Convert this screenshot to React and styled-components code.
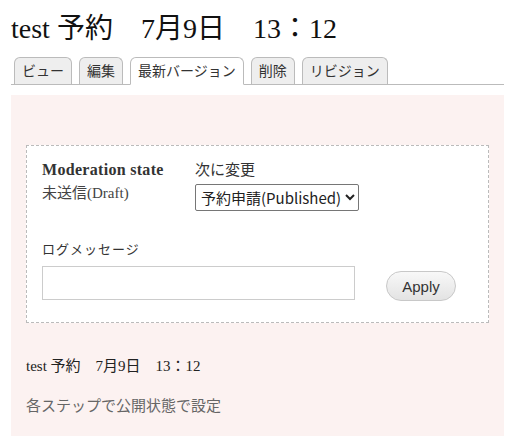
import styled, { createGlobalStyle } from 'styled-components';

const GlobalStyle = createGlobalStyle`
  body {
    margin: 0;
    background: #fff;
    font-family: "Liberation Serif", "Noto Sans CJK JP", serif;
    color: #222;
  }
`;

const Page = styled.div`
  padding: 0 7px 0 11px;
`;

const Title = styled.h1`
  margin: 12px 0 11px;
  font-size: 28px;
  line-height: 34px;
  font-weight: normal;
  color: #111;
`;

const Tabs = styled.ul`
  display: flex;
  gap: 7px;
  margin: 0;
  padding: 0 0 0 3px;
  list-style: none;
  border-bottom: 1px solid #bbb;
  height: 27px;
`;

const Tab = styled.li`
  box-sizing: border-box;
  height: ${(p) => (p.active ? '28px' : '27px')};
  padding: 0 7px;
  border: 1px solid #bbb;
  border-bottom: ${(p) => (p.active ? '1px solid #fff' : 'none')};
  border-radius: 6px 6px 0 0;
  background: ${(p) => (p.active ? '#fff' : '#eee')};
  font-family: "Noto Sans CJK JP", sans-serif;
  font-size: 14px;
  line-height: 25px;
  color: #333;
  white-space: nowrap;
`;

const Panel = styled.div`
  margin-top: 10px;
  background: #fcf2f1;
  padding: 50px 15px 21px;
`;

const FormBox = styled.div`
  background: #fff;
  border: 1px dashed #bbb;
  padding: 14px 15px 21px;
`;

const StateRow = styled.div`
  display: flex;
`;

const StateCol = styled.div`
  width: 153px;
`;

const FieldLabel = styled.div`
  font-size: ${(p) => (p.small ? '13px' : p.bold ? '16px' : '15px')};
  line-height: ${(p) => (p.small ? '16px' : '20px')};
  font-weight: ${(p) => (p.bold ? 'bold' : 'normal')};
  letter-spacing: ${(p) => (p.small ? '1px' : p.bold ? '0.3px' : '0')};
  color: #333;
`;

const StateValue = styled.div`
  margin-top: 3px;
  font-size: 15px;
  line-height: 20px;
  color: #444;
`;

const Select = styled.select`
  margin-top: 4px;
  height: 27px;
  width: 164px;
  border: 1px solid #767676;
  border-radius: 2px;
  background: #fff;
  font-family: "Noto Sans CJK JP", sans-serif;
  font-size: 15px;
  color: #222;
  padding: 0 1px;
`;

const LogSection = styled.div`
  margin-top: 31px;
`;

const LogRow = styled.div`
  display: flex;
  align-items: flex-start;
  gap: 31px;
  margin-top: 8px;
`;

const TextInput = styled.input`
  box-sizing: border-box;
  width: 313px;
  height: 34px;
  border: 1px solid #ccc;
  background: #fff;
  padding: 4px 6px;
`;

const ApplyButton = styled.button`
  margin-top: 5px;
  height: 30px;
  width: 70px;
  border: 1px solid #c8c8c8;
  border-radius: 15px;
  background: linear-gradient(#f8f8f8, #e3e3e3);
  font-family: "Liberation Sans", sans-serif;
  font-size: 15px;
  color: #333;
`;

const Summary = styled.p`
  margin: 34px 0 0;
  font-size: 15px;
  line-height: 18px;
  color: #222;
`;

const Note = styled.p`
  margin: 22px 0 0;
  font-size: 15px;
  line-height: 18px;
  color: #666;
`;

const tabs = ['ビュー', '編集', '最新バージョン', '削除', 'リビジョン'];

export default function App() {
  return (
    <Page>
      <GlobalStyle />
      <Title>test 予約　7月9日　13：12</Title>
      <Tabs>
        {tabs.map((t) => (
          <Tab key={t} active={t === '最新バージョン'}>
            {t}
          </Tab>
        ))}
      </Tabs>
      <Panel>
        <FormBox>
          <StateRow>
            <StateCol>
              <FieldLabel bold>Moderation state</FieldLabel>
              <StateValue>未送信(Draft)</StateValue>
            </StateCol>
            <div>
              <FieldLabel>次に変更</FieldLabel>
              <Select defaultValue="published">
                <option value="published">予約申請(Published)</option>
              </Select>
            </div>
          </StateRow>
          <LogSection>
            <FieldLabel small>ログメッセージ</FieldLabel>
            <LogRow>
              <TextInput type="text" />
              <ApplyButton>Apply</ApplyButton>
            </LogRow>
          </LogSection>
        </FormBox>
        <Summary>test 予約　7月9日　13：12</Summary>
        <Note>各ステップで公開状態で設定</Note>
      </Panel>
    </Page>
  );
}
